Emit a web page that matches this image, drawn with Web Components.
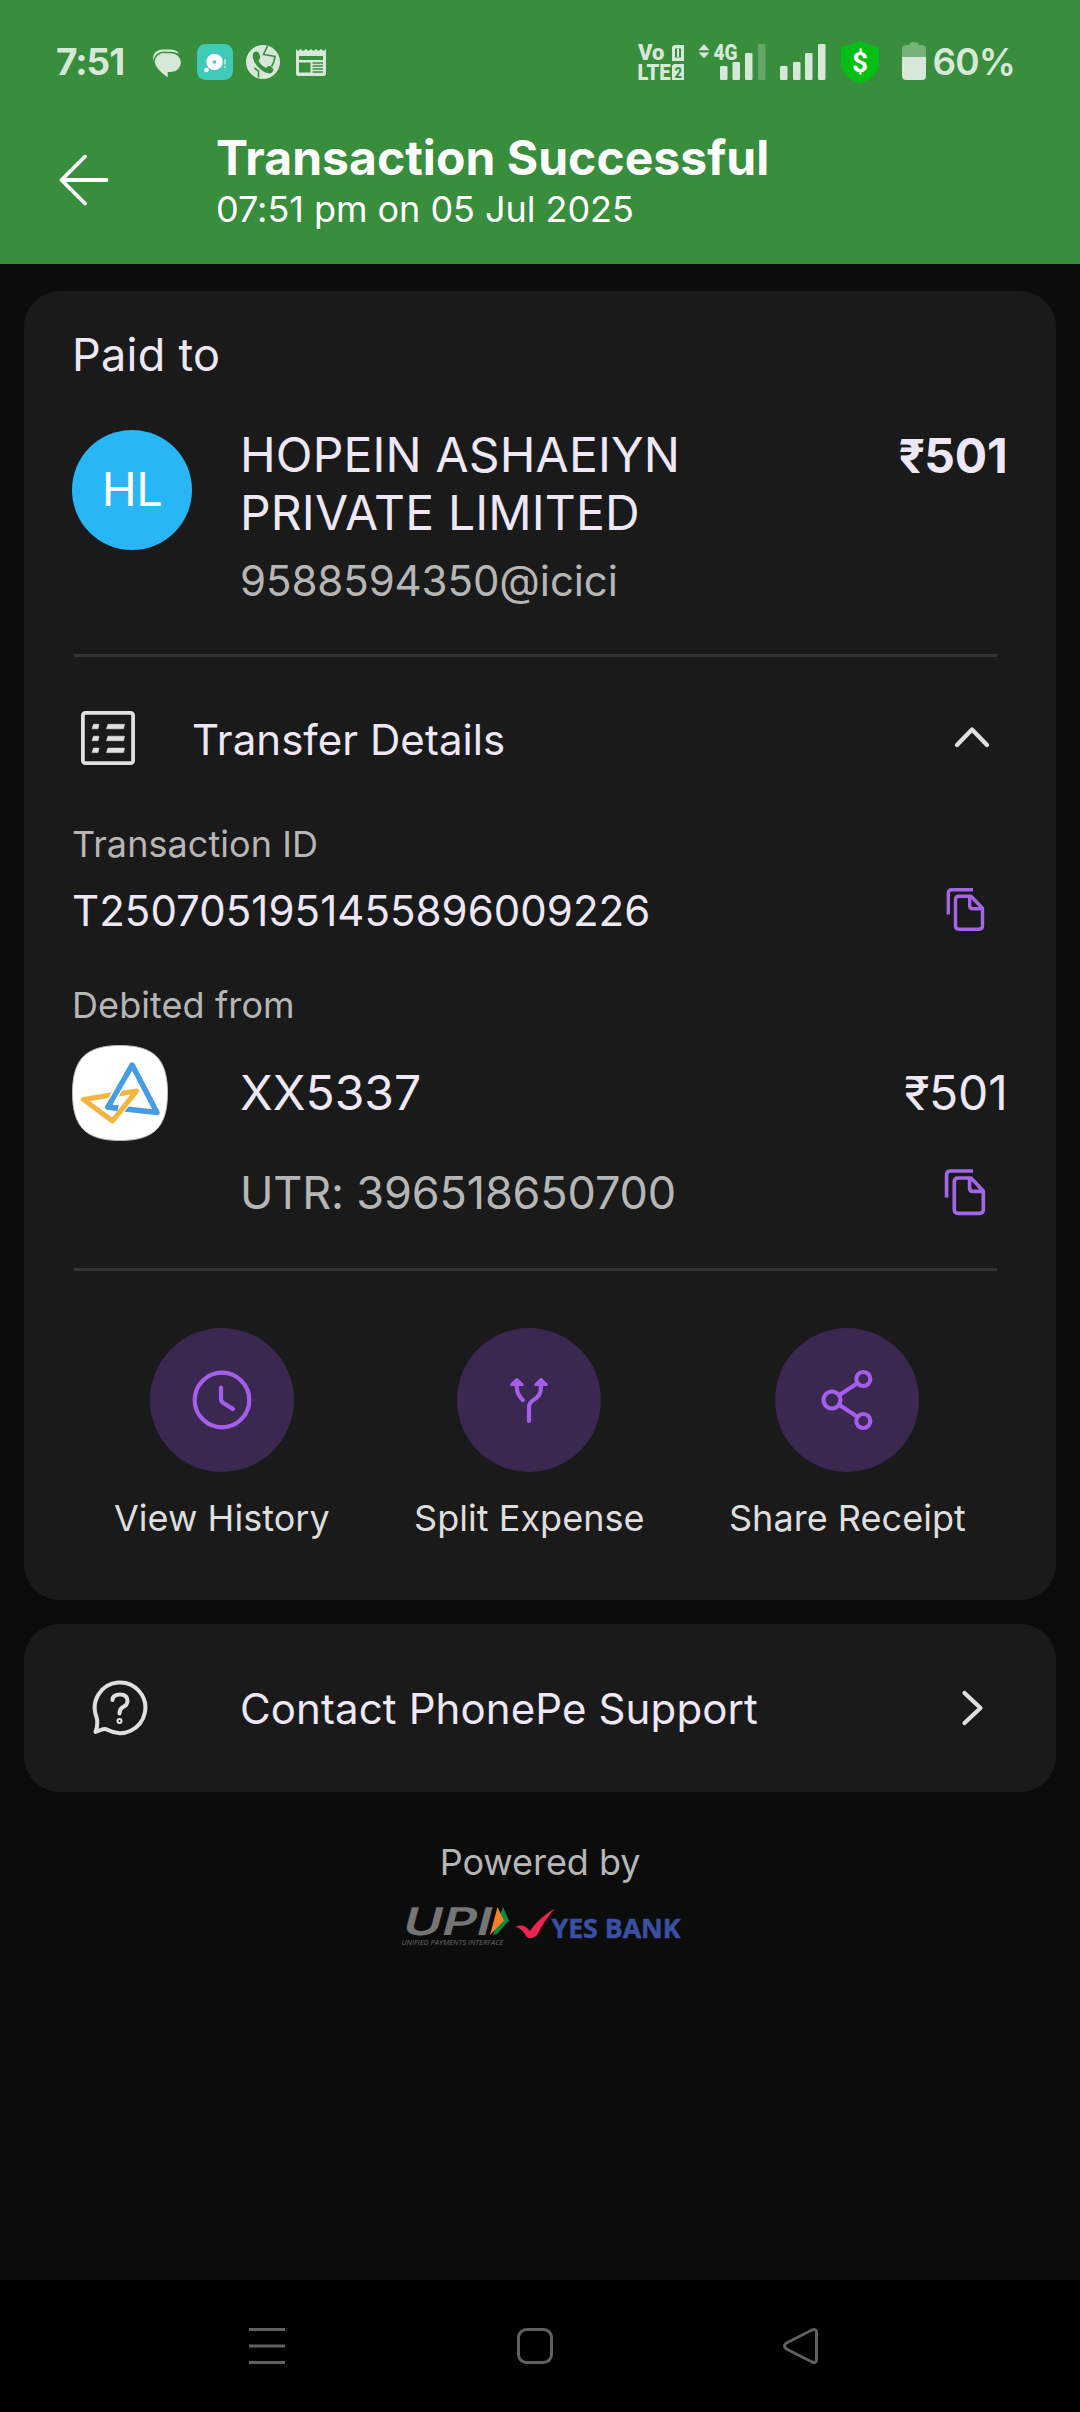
<!DOCTYPE html>
<html lang="en">
<head>
<meta charset="utf-8">
<title>Transaction Successful</title>
<style>
html,body{margin:0;background:#0c0c0c}
body{width:1080px;height:2412px;overflow:hidden;font-family:Inter,"Noto Sans",sans-serif;color:#ede7f6}
</style>
</head>
<body>
<receipt-page></receipt-page>
<script>
const define = (name, html) => {
  const t = document.createElement('template');
  t.innerHTML = html;
  customElements.define(name, class extends HTMLElement {
    constructor() {
      super();
      this.attachShadow({ mode: 'open' }).append(t.content.cloneNode(true));
    }
  });
};

define('status-bar', `
<style>
:host{display:flex;align-items:center;height:124px;padding:0 65px 0 56px;color:#d7e8d8;box-sizing:border-box}
.time{font-weight:700;font-size:37px;line-height:44px;white-space:pre;letter-spacing:-1.05px}
.pct{font-weight:600;font-size:37px;line-height:44px;white-space:pre;letter-spacing:-.9px;margin-left:-2px}
.left{flex:1;display:flex;align-items:center;gap:26px}
svg{display:block}
</style>
<div class="left"><span class="time">7:51</span>
<svg width="178" height="44" viewBox="150 40 178 44">
  <path d="M153.500 62C151 54 157 49.500 163 49.500H170C174 49.500 177 51 178.500 53" fill="#d7e8d8"/>
  <path d="M166 52.500H171A10.500 10 0 0 1 171 72.800H168.500V79C163 75 154 69 154 62A10 10 0 0 1 166 52.500Z" fill="#d7e8d8" stroke="#388e3c" stroke-width="1.600"/>
  <rect x="197" y="44" width="36" height="36" rx="8.500" fill="#40cbb9"/>
  <circle cx="214.500" cy="62" r="8.200" fill="#fff"/><rect x="213" y="60.500" width="3" height="3" rx=".6" fill="#40cbb9"/>
  <circle cx="206.500" cy="70" r="2.300" fill="#fff"/><path d="M225 59V64.500M225 66V68" stroke="#b9ece5" stroke-width="1.600"/>
  <circle cx="263" cy="62" r="17" fill="#d7e8d8"/>
  <path d="M267.500 46L263.500 54.500L275 56.500Q274 63 271.500 66.500M258.500 77.500V71L254.500 68" fill="none" stroke="#388e3c" stroke-width="1.600"/>
  <path d="M253 54C251 61 261 73 269.500 73.500C274 72.500 274 69 272 67.500C269.500 65 267.500 66 266 68C262.500 66.500 259.500 63 258.500 60.500C261 58.500 260.500 55.500 258.500 52.500C256.500 50.500 253.500 51.500 253 54Z" fill="#388e3c"/>
  <path d="M296 49L298 51L300.500 49L303 51L306 49L308.500 51L311 49L313.500 51L316 49L318.500 51L321 49L323.500 51L326 49V73.500Q326 76 323.500 76H298.500Q296 76 296 73.500Z" fill="#d7e8d8"/>
  <rect x="299" y="56" width="24" height="4" fill="#388e3c"/><rect x="299" y="62.500" width="11.500" height="10" fill="#388e3c"/>
  <path d="M312.500 63H323M312.500 66H323M312.500 69H323M312.500 72H323" stroke="#388e3c" stroke-width="1.400"/>
</svg></div>
<svg width="300" height="48" viewBox="634 38 300 48" fill="#d7e8d8" font-family="Roboto,sans-serif" font-weight="900">
  <text font-size="21.500"><tspan x="638" y="60" textLength="26.500" lengthAdjust="spacingAndGlyphs">Vo</tspan><tspan x="637.500" y="80" textLength="33" lengthAdjust="spacingAndGlyphs">LTE</tspan></text>
  <path d="M674 45H684V61H672V47Z"/><path d="M674 64H684V80H672V66Z"/>
  <path d="M675 48.500H681V57.500H675Z" fill="#388e3c"/><rect x="677" y="49" width="2" height="8"/>
  <text x="674.500" y="77.500" font-size="15" fill="#388e3c" textLength="7.500" lengthAdjust="spacingAndGlyphs">2</text>
  <path d="M704 44L709.500 50.300H698.500ZM704 58.300L709.500 52.500H698.500Z"/>
  <text x="713.500" y="59.500" font-size="22" textLength="24" lengthAdjust="spacingAndGlyphs">4G</text>
  <rect x="720" y="66" width="7.500" height="14" rx="1.200"/><rect x="732.500" y="62" width="7.500" height="18" rx="1.200"/><rect x="745" y="53" width="7.500" height="27" rx="1.200"/><rect x="758" y="44" width="7.500" height="36" rx="1.200" fill="#62a765"/>
  <rect x="780" y="66" width="7.500" height="14" rx="1.200"/><rect x="793" y="62" width="7.500" height="18" rx="1.200"/><rect x="805" y="53" width="7.500" height="27" rx="1.200"/><rect x="818" y="44" width="7.500" height="36" rx="1.200"/>
  <path d="M860 40.500Q868 46 879 46.500V62Q879 77 860 83.500Q841 77 841 62V46.500Q852 46 860 40.500Z" fill="#04c014"/>
  <text x="860" y="71.500" font-size="28" font-weight="700" fill="#fff" text-anchor="middle">$</text>
  <path d="M902 57V49Q902 45 906 45H909Q910 42 914 42Q918 42 919 45H922Q926 45 926 49V57Z" fill="#78b27b"/>
  <path d="M902 57H926V76Q926 80 922 80H906Q902 80 902 76Z"/>
</svg>
<span class="pct">60%</span>`);

define('title-bar', `
<style>
:host{display:flex;height:140px;color:#fff}
.back{width:216px;display:flex;padding:31px 0 0 59px;box-sizing:border-box}
h1,p{margin:0;white-space:pre}
h1{font-weight:700;font-size:48px;line-height:60px;margin-top:4px;letter-spacing:.04px}
p{font-size:36px;line-height:44px;margin-top:-1px;letter-spacing:-.04px}
svg{display:block}
</style>
<div class="back"><svg width="52" height="54" viewBox="0 0 52 54" fill="none" stroke="#fff" stroke-width="3.800" stroke-linecap="round" stroke-linejoin="round"><path d="M26 1.500L2.500 25L26 48.500M3 25H47.500"/></svg></div>
<div><h1>Transaction Successful</h1><p>07:51 pm on 05 Jul 2025</p></div>`);

define('info-card', `
<style>:host{display:flex;flex-direction:column;background:#1a1a1a;border-radius:36px;margin:0 24px;box-sizing:border-box;overflow:hidden}</style><slot></slot>`);

define('rule-line', `<style>:host{display:block;height:3px;margin:0 59px 0 50px;background:#343434}</style>`);

define('payee-block', `
<style>
:host{display:block;height:363px}
h2{margin:0;font-weight:400;font-size:45px;line-height:56px;padding:36px 0 43px 48px;letter-spacing:.27px}
.row{display:flex;padding:0 48.500px 0 48px}
.avatar{width:120px;height:120px;border-radius:50%;background:#29b6f6;color:#fff;font-size:47px;line-height:118px;text-align:center;margin:4px 48px 0 0;letter-spacing:-.4px}
.who{flex:1;display:flex;flex-direction:column;align-items:flex-start;white-space:pre}
.name{font-size:48px;line-height:58px;letter-spacing:.16px}
.vpa{font-size:42px;line-height:51px;margin-top:13px;color:#b6b6b6;letter-spacing:-.09px}
.amt{font-weight:700;font-size:48px;line-height:58px;letter-spacing:-.2px;padding-top:1px}
.amt span{font-family:Roboto,sans-serif}
</style>
<h2>Paid to</h2>
<div class="row">
 <div class="avatar">HL</div>
 <div class="who"><span class="name">HOPEIN ASHAEIYN</span><span class="name">PRIVATE LIMITED</span><span class="vpa">9588594350@icici</span></div>
 <div class="amt"><span>₹</span>501</div>
</div>`);

define('details-head', `
<style>
:host{display:flex;align-items:center;height:166px;padding:0 65px 0 56px}
svg{display:block;margin-top:-4px}
span{flex:1;font-size:42px;line-height:51px;padding-left:56px;letter-spacing:.05px;margin-top:-1px}
</style>
<svg width="56" height="56" viewBox="80 710 56 56" fill="#e0e0e0"><rect x="82.900" y="712.900" width="50.200" height="50.200" rx="2.500" fill="none" stroke="#e0e0e0" stroke-width="3.800"/>
<path d="M93.500 724.300H99L98 728.800H92ZM108 724.300H124.500L123.500 728.800H106.500ZM93.500 736.200H99L98 740.700H92ZM108 736.200H124.500L123.500 740.700H106.500ZM93.500 748.100H99L98 752.600H92ZM108 748.100H124.500L123.500 752.600H106.500Z" stroke="#e0e0e0" stroke-width=".6" stroke-linejoin="round"/></svg>
<span>Transfer Details</span>
<svg width="38" height="26" viewBox="953 726 38 26" fill="none" stroke="#e0e0e0" stroke-width="4.300" stroke-linecap="round" stroke-linejoin="round"><path d="M957 746L972 730.500L987 746"/></svg>`);

define('copy-icon', `
<style>:host{display:block;width:40px}svg{display:block;width:100%;height:auto}</style>
<svg viewBox="945 887 40 46" fill="none" stroke="#a366e5" stroke-width="3.400" stroke-linecap="round" stroke-linejoin="round"><path d="M948.300 914.500V893.500Q948.300 889.800 952 889.800H973" stroke-linecap="butt"/><path d="M971 896.300H959Q955.500 896.300 955.500 899.800V925.700Q955.500 929.200 959 929.200H979Q982.500 929.200 982.500 925.700V908.300ZM969.700 897.500V905.500Q969.700 908.800 973 908.800H981.500"/></svg>`);

define('txn-id', `
<style>
:host{display:block;padding-left:48px}
p{margin:0;font-size:36px;line-height:42px;color:#b6b6b6;letter-spacing:.06px}
.row{display:flex;align-items:center;height:90px;padding-right:71px}
.row span{flex:1;font-size:42px;line-height:51px;letter-spacing:.04px}
</style>
<p>Transaction ID</p>
<div class="row"><span>T2507051951455896009226</span><copy-icon></copy-icon></div>`);

define('bank-logo', `
<style>:host{display:block;width:96px;height:96px}svg{display:block}</style>
<svg width="96" height="96" viewBox="0 0 96 96" fill="none" stroke-linejoin="round">
<path d="M48 .5C82 .5 95.500 14 95.500 48S82 95.500 48 95.500S.5 82 .5 48S14 .5 48 .5Z" fill="#fff" stroke="#bbb" stroke-width="1"/>
<path d="M60.200 20L85 67.500L36 62Z" stroke="#459de3" stroke-width="5.400"/>
<path d="M63.500 46.500L40.500 75L12.500 54.500" stroke="#fff" stroke-width="8"/>
<path d="M64.500 46L40.500 76L11.500 54.500Z" stroke="#f4b53f" stroke-width="5.200"/>
<path d="M54 31L40 55" stroke="#fff" stroke-width="8"/>
<path d="M60.200 20L36 62L46 63.200" stroke="#459de3" stroke-width="5.400"/>
</svg>`);

define('debit-block', `
<style>
:host{display:block;padding:29px 0 40px 48px}
p{margin:0;font-size:36px;line-height:42px;color:#b6b6b6;letter-spacing:.08px}
.row{display:flex;align-items:center;height:132px;padding-right:48.500px;font-size:48px;line-height:58px}
bank-logo{margin:2px 72px 0 0}
.acc{flex:1;padding-top:1px}
.amt{padding-top:2px;letter-spacing:-.2px}
.amt span{font-family:Roboto,sans-serif}
.utr{display:flex;align-items:center;height:70px;padding:0 70px 0 168px;font-size:45px;line-height:56px;color:#b6b6b6;letter-spacing:-.15px}
.utr span{flex:1}
copy-icon{width:43px}
</style>
<p>Debited from</p>
<div class="row"><bank-logo></bank-logo><span class="acc">XX5337</span><div class="amt"><span>₹</span>501</div></div>
<div class="utr"><span>UTR: 396518650700</span><copy-icon></copy-icon></div>`);

define('round-action', `
<style>
:host{display:flex;flex-direction:column;align-items:center;color:#dedede;font-size:36px;line-height:44px;white-space:pre}
.disc{width:144px;height:144px;border-radius:50%;background:#3a2850;display:flex;align-items:center;justify-content:center;margin-bottom:24px}
</style>
<div class="disc"><slot name="icon"></slot></div><slot></slot>`);

define('action-row', `
<style>
:host{display:flex;justify-content:space-around;padding:57px 48px 60px 47.800px}
span{letter-spacing:.04px}
svg{display:block;fill:none;stroke:#a45eeb;stroke-width:4.200;stroke-linecap:round;stroke-linejoin:round}
</style>
<round-action><svg slot="icon" width="72" height="72" viewBox="186 1364 72 72"><circle cx="222" cy="1400" r="27.300"/><path d="M221 1387.500V1399Q221 1401.500 223 1402.700L233 1409"/></svg><span>View History</span></round-action>
<round-action><svg slot="icon" width="72" height="72" viewBox="493 1364 72 72"><path d="M516.800 1381V1387Q516.800 1394.500 522.800 1400M541 1381V1387Q541 1396 533.500 1400Q529 1402.500 529 1407V1421"/><path d="M516.800 1379.500L511.500 1384.500H522.100ZM541 1379.500L535.700 1384.500H546.300Z" fill="#a45eeb" stroke-width="3"/></svg><span>Split Expense</span></round-action>
<round-action><svg slot="icon" width="72" height="72" viewBox="811 1364 72 72"><circle cx="832" cy="1400" r="8.500"/><circle cx="863.300" cy="1379" r="7"/><circle cx="863.300" cy="1421" r="7"/><path d="M839.500 1395L857 1383.500M839.500 1405L857 1416.500"/></svg><span>Share Receipt</span></round-action>`);

define('support-row', `
<style>
:host{display:flex;align-items:center;height:168px;padding:0 70px 0 68px}
svg{display:block}
span{flex:1;font-size:42px;line-height:51px;padding-left:92px;letter-spacing:.11px}
</style>
<svg width="56" height="56" viewBox="92 1680 56 56" fill="none" stroke="#e0e0e0" stroke-width="4" stroke-linecap="round" stroke-linejoin="round"><path d="M96.500 1717A25.300 25.300 0 1 1 108 1730Q105 1728.500 102 1729.500L95.500 1732Q98.500 1724 96.500 1717Z"/><path d="M112.500 1700Q112.500 1694.500 120 1694.500Q127.500 1694.500 127.500 1701Q127.500 1705 123 1707Q119.500 1709 119.500 1713.500"/><circle cx="119.500" cy="1721" r="1"/></svg>
<span>Contact PhonePe Support</span>
<svg width="26" height="38" viewBox="960 1689 26 38" fill="none" stroke="#e0e0e0" stroke-width="4.200" stroke-linecap="round" stroke-linejoin="round"><path d="M964.500 1693L980.500 1708L964.500 1723"/></svg>`);

define('powered-by', `
<style>
:host{display:flex;flex-direction:column;align-items:center;padding-top:48px;color:#b6b6b6;font-size:36px;line-height:44px}
span{letter-spacing:-.05px}
svg{display:block;margin-top:16px;overflow:visible}
</style>
<span>Powered by</span>
<svg width="290" height="50" viewBox="395 1900 290 50">
<g transform="translate(404 1935) skewX(-15)"><text x="-3.500" y="0" font-family="Inter,sans-serif" font-weight="600" font-size="38" fill="#757575" textLength="88.500" lengthAdjust="spacingAndGlyphs">UPI</text></g>
<path d="M503 1907L509 1920.500L497 1934L493 1935Z" fill="#0e8a43"/><path d="M497.500 1907L490 1935L504 1920.500Z" fill="#f58025"/>
<text x="401.500" y="1945" font-family="Open Sans,sans-serif" font-style="italic" font-size="8" fill="#666" textLength="102" lengthAdjust="spacingAndGlyphs">UNIFIED PAYMENTS INTERFACE</text>
<path d="M515.500 1927C521 1924 526 1926 530 1931C536 1922 545 1914 555 1908.500C547 1917 542 1926 537 1935C533 1939 528 1939 526 1936C524 1932 521 1928 515.500 1927Z" fill="#ee2350"/>
<text x="551.500" y="1938" font-family="Open Sans,sans-serif" font-weight="700" font-size="27" fill="#3a50a3" stroke="#3a50a3" stroke-width=".5" textLength="129" lengthAdjust="spacingAndGlyphs">YES BANK</text>
</svg>`);

define('nav-bar', `
<style>
:host{display:flex;justify-content:space-between;height:132px;background:#000;padding:45px 257px 0 246px;box-sizing:border-box}
svg{display:block;fill:none;stroke:#606060;stroke-width:3}
</style>
<svg width="42" height="42" viewBox="246 2325 42 42"><path d="M249 2329.500H285M249 2346H285M249 2362.500H285"/></svg>
<svg width="42" height="42" viewBox="514 2325 42 42"><rect x="518.500" y="2329.500" width="33" height="33" rx="8"/></svg>
<svg width="42" height="42" viewBox="781 2325 42 42" stroke-linejoin="round"><path d="M786.500 2343L812 2330Q816.500 2328.500 816.500 2332V2360Q816.500 2363.500 812 2362L786.500 2349Q782.500 2346 786.500 2343Z"/></svg>`);

define('receipt-page', `
<style>
:host{display:flex;flex-direction:column;height:2412px;background:#0c0c0c}
header{background:#388e3c;height:264px;margin-bottom:27px}
main{flex:1;display:flex;flex-direction:column}
.main-card{height:1309px;margin-bottom:24px}
</style>
<header><status-bar></status-bar><title-bar></title-bar></header>
<main>
<info-card class="main-card">
<payee-block></payee-block><rule-line></rule-line><details-head></details-head><txn-id></txn-id><debit-block></debit-block><rule-line></rule-line><action-row></action-row>
</info-card>
<info-card><support-row></support-row></info-card>
<powered-by></powered-by>
</main>
<nav-bar></nav-bar>
`);
</script>
</body>
</html>
